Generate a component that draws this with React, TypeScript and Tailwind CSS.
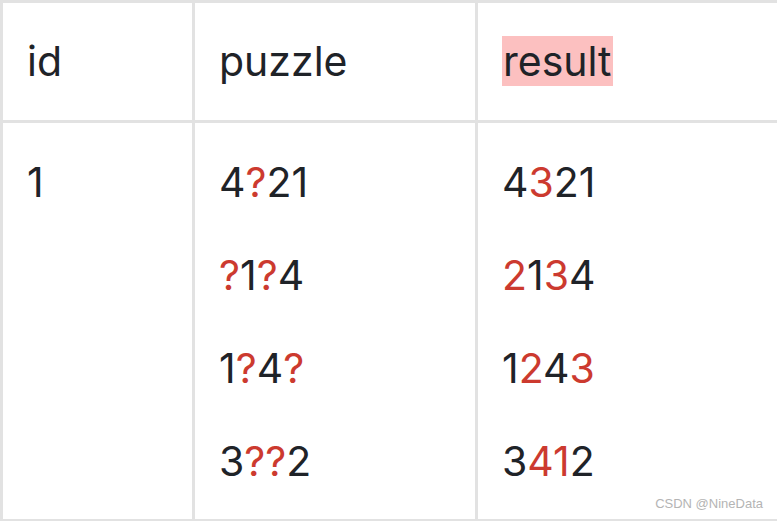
import React from 'react';

// Each row: list of [char, isRed]
type Seg = { t: string; red?: boolean };

const puzzle: Seg[][] = [
  [{ t: '4' }, { t: '?', red: true }, { t: '21' }],
  [{ t: '?', red: true }, { t: '1' }, { t: '?', red: true }, { t: '4' }],
  [{ t: '1' }, { t: '?', red: true }, { t: '4' }, { t: '?', red: true }],
  [{ t: '3' }, { t: '??', red: true }, { t: '2' }],
];

const result: Seg[][] = [
  [{ t: '4' }, { t: '3', red: true }, { t: '21' }],
  [{ t: '2', red: true }, { t: '1' }, { t: '3', red: true }, { t: '4' }],
  [{ t: '1' }, { t: '2', red: true }, { t: '4' }, { t: '3', red: true }],
  [{ t: '3' }, { t: '41', red: true }, { t: '2' }],
];

const Lines: React.FC<{ rows: Seg[][] }> = ({ rows }) => (
  <div className="flex flex-col">
    {rows.map((row, i) => (
      <div key={i} className="h-[93px] leading-[93px]">
        {row.map((s, j) => (
          <span key={j} className={s.red ? 'text-[#cc3a2f]' : ''}>
            {s.t}
          </span>
        ))}
      </div>
    ))}
  </div>
);

const App: React.FC = () => {
  return (
    <div
      className="relative w-[777px] h-[521px] bg-white text-[#1f2328] text-[41px] overflow-hidden"
      style={{ fontFamily: 'Inter, "Noto Sans", sans-serif' }}
    >
      <table className="table-fixed border-collapse w-[777px]">
        <colgroup>
          <col className="w-[192px]" />
          <col className="w-[283px]" />
          <col className="w-[302px]" />
        </colgroup>
        <thead>
          <tr className="h-[120px]">
            <th className="border-[3px] border-[#e2e2e2] font-normal text-left align-middle pl-[24px]">id</th>
            <th className="border-[3px] border-[#e2e2e2] font-normal text-left align-middle pl-[24px]">puzzle</th>
            <th className="border-[3px] border-[#e2e2e2] font-normal text-left align-middle pl-[24px]">
              <span className="bg-[#fcc0c0] px-[1px]">result</span>
            </th>
          </tr>
        </thead>
        <tbody>
          <tr>
            <td className="border-[3px] border-[#e2e2e2] align-top pl-[24px] pt-[13px] pb-[11px]">
              <div className="h-[93px] leading-[93px]">1</div>
            </td>
            <td className="border-[3px] border-[#e2e2e2] align-top pl-[24px] pt-[13px] pb-[11px]">
              <Lines rows={puzzle} />
            </td>
            <td className="border-[3px] border-[#e2e2e2] align-top pl-[24px] pt-[13px] pb-[11px]">
              <Lines rows={result} />
            </td>
          </tr>
        </tbody>
      </table>
      <div
        className="absolute right-[14px] bottom-[8px] text-[13px] text-[#b4b4b4]"
        style={{ fontFamily: '"Liberation Sans", sans-serif' }}
      >
        CSDN @NineData
      </div>
    </div>
  );
};

export default App;
